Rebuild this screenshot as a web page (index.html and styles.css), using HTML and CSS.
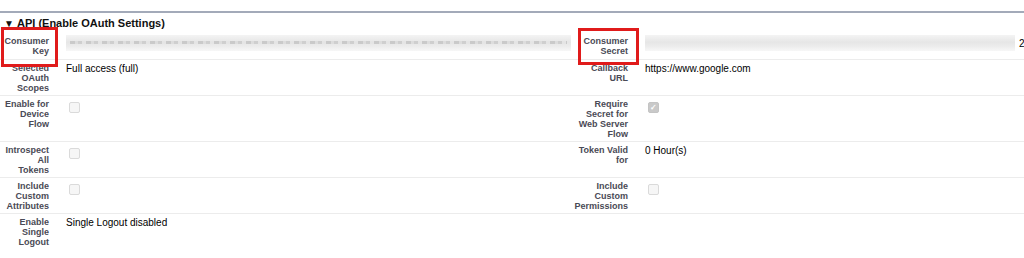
FILE: index.html
```html
<!DOCTYPE html>
<html lang="en">
<head>
  <meta charset="UTF-8" />
  <title>API (Enable OAuth Settings)</title>
  <link rel="stylesheet" href="styles.css">
</head>
<body>

<div class="section">
  <h3 class="section-head"><span class="twist">&#9660;</span>API (Enable OAuth Settings)</h3>

  <table class="detail">
    <colgroup>
      <col class="c-label">
      <col class="c-value">
      <col class="c-label2">
      <col class="c-value2">
    </colgroup>
    <tr class="row-first">
      <td class="label"><span class="mark">Consumer<br>Key</span></td>
      <td class="value"><div class="blur wide"><span class="smudge"></span></div></td>
      <td class="label"><span class="mark mark-right">Consumer<br>Secret</span></td>
      <td class="value"><div class="blur"><span class="smudge light"></span></div><span class="tail">2</span></td>
    </tr>
    <tr>
      <td class="label">Selected<br>OAuth<br>Scopes</td>
      <td class="value">Full access (full)</td>
      <td class="label">Callback<br>URL</td>
      <td class="value">https://www.google.com</td>
    </tr>
    <tr>
      <td class="label">Enable for<br>Device<br>Flow</td>
      <td class="value"><span class="check"></span></td>
      <td class="label">Require<br>Secret for<br>Web Server<br>Flow</td>
      <td class="value"><span class="check checked">&#10003;</span></td>
    </tr>
    <tr>
      <td class="label">Introspect<br>All<br>Tokens</td>
      <td class="value"><span class="check"></span></td>
      <td class="label">Token Valid<br>for</td>
      <td class="value">0 Hour(s)</td>
    </tr>
    <tr>
      <td class="label">Include<br>Custom<br>Attributes</td>
      <td class="value"><span class="check"></span></td>
      <td class="label">Include<br>Custom<br>Permissions</td>
      <td class="value"><span class="check"></span></td>
    </tr>
    <tr class="row-last">
      <td class="label">Enable<br>Single<br>Logout</td>
      <td class="value">Single Logout disabled</td>
      <td class="label"></td>
      <td class="value"></td>
    </tr>
  </table>
</div>

</body>
</html>
```

FILE: styles.css
```css
body {
  margin: 0;
  font-family: 'Liberation Sans', Arial, sans-serif;
  background: #fff;
  color: #000;
}
.section {
  padding-top: 11px;
}
.section-head {
  margin: 0;
  border-top: 2px solid #a3aab9;
  padding: 3px 0 0 4px;
  font-size: 11px;
  line-height: 14px;
  font-weight: bold;
  color: #111;
}
.twist {
  display: inline-block;
  font-size: 10px;
  width: 13px;
  vertical-align: 0;
}
.detail {
  width: 100%;
  table-layout: fixed;
  border-collapse: collapse;
  margin-top: 1px;
}
.c-label { width: 56px; }
.c-value { width: 515px; }
.c-label2 { width: 64px; }
.detail td {
  vertical-align: top;
  border-bottom: 1px solid #ececec;
  padding: 3px 0 2px 0;
}
.detail tr.row-last td {
  border-bottom: none;
  height: 38px;
}
.label {
  text-align: right;
  padding-right: 7px !important;
  padding-left: 2px !important;
  font-size: 9px;
  line-height: 10px;
  font-weight: bold;
  color: #4a4a56;
}
.value {
  padding-left: 10px !important;
  font-size: 10px;
  line-height: 12px;
  color: #000;
  white-space: nowrap;
  overflow: hidden;
}
.row-first td {
  height: 21px;
}
.row-first .label {
  padding-top: 4px;
}
.mark {
  display: inline-block;
  position: relative;
}
.mark::after {
  content: "";
  position: absolute;
  left: -3px;
  right: -9px;
  top: -9px;
  bottom: -11px;
  border: 3px solid #e01b1b;
}
.mark-right::after {
  left: -5px;
  right: -11px;
  top: -8px;
  bottom: -9px;
}
.blur {
  display: inline-block;
  vertical-align: top;
  height: 16px;
  width: 370px;
  background: linear-gradient(#f4f4f4, #e6e6e6 45%, #ececec 70%, #f7f7f7);
  position: relative;
}
.blur.wide {
  width: 505px;
}
.smudge {
  position: absolute;
  left: 4px;
  right: 4px;
  top: 6px;
  height: 3px;
  background: repeating-linear-gradient(90deg, #bdbdbd 0 5px, #d8d8d8 5px 8px, #c4c4c4 8px 12px, #e4e4e4 12px 16px);
  opacity: 0.7;
}
.smudge.light {
  opacity: 0;
}
.tail {
  display: inline-block;
  margin-left: 4px;
  margin-top: 3px;
  font-size: 10px;
}
.check {
  display: inline-block;
  width: 9px;
  height: 9px;
  margin: 3px 0 0 3px;
  border: 1px solid #dadada;
  border-radius: 2px;
  background: #f6f6f6;
  font-size: 8px;
  line-height: 9px;
  text-align: center;
  color: #fff;
}
.check.checked {
  background: #c9c9c9;
  border-color: #c4c4c4;
  font-weight: bold;
}
```
